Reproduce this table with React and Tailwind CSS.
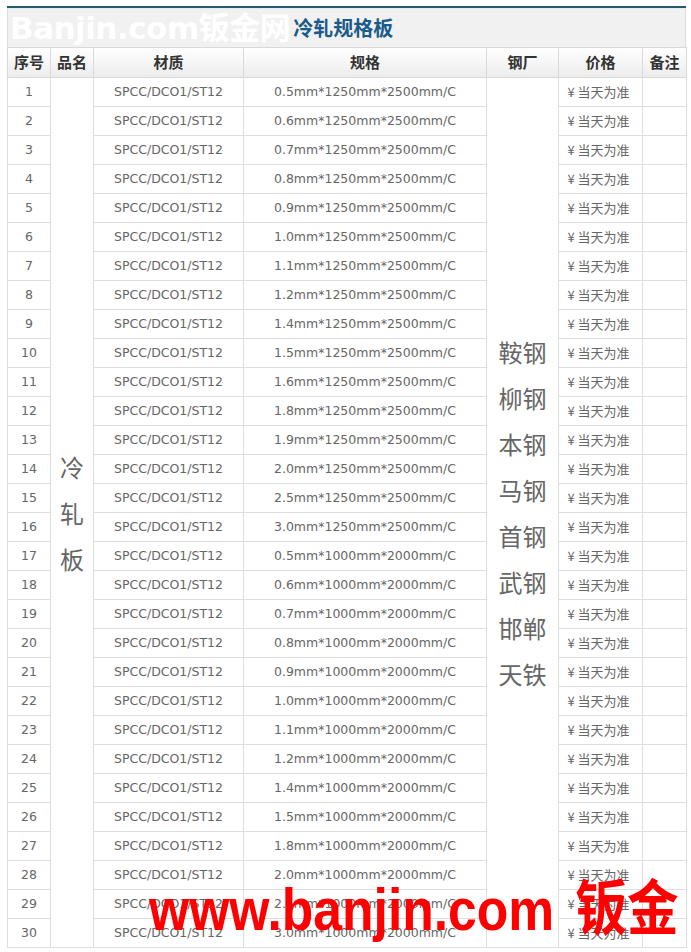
const specs = [
  "0.5mm*1250mm*2500mm/C",
  "0.6mm*1250mm*2500mm/C",
  "0.7mm*1250mm*2500mm/C",
  "0.8mm*1250mm*2500mm/C",
  "0.9mm*1250mm*2500mm/C",
  "1.0mm*1250mm*2500mm/C",
  "1.1mm*1250mm*2500mm/C",
  "1.2mm*1250mm*2500mm/C",
  "1.4mm*1250mm*2500mm/C",
  "1.5mm*1250mm*2500mm/C",
  "1.6mm*1250mm*2500mm/C",
  "1.8mm*1250mm*2500mm/C",
  "1.9mm*1250mm*2500mm/C",
  "2.0mm*1250mm*2500mm/C",
  "2.5mm*1250mm*2500mm/C",
  "3.0mm*1250mm*2500mm/C",
  "0.5mm*1000mm*2000mm/C",
  "0.6mm*1000mm*2000mm/C",
  "0.7mm*1000mm*2000mm/C",
  "0.8mm*1000mm*2000mm/C",
  "0.9mm*1000mm*2000mm/C",
  "1.0mm*1000mm*2000mm/C",
  "1.1mm*1000mm*2000mm/C",
  "1.2mm*1000mm*2000mm/C",
  "1.4mm*1000mm*2000mm/C",
  "1.5mm*1000mm*2000mm/C",
  "1.8mm*1000mm*2000mm/C",
  "2.0mm*1000mm*2000mm/C",
  "2.5mm*1000mm*2000mm/C",
  "3.0mm*1000mm*2000mm/C",
];

const mills = ["鞍钢", "柳钢", "本钢", "马钢", "首钢", "武钢", "邯郸", "天铁"];

const cjk = { fontFamily: '"Noto Sans CJK SC", sans-serif' };
const latin = { fontFamily: '"DejaVu Sans", "Noto Sans CJK SC", sans-serif' };

const App = () => {
  return (
    <main className="bg-white min-h-[952px] pt-[6px] pl-[7px]">
      <div className="relative w-[679px]">
        {/* title bar */}
        <div className="border-t-[2px] border-[#245a6c]">
          <div className="h-[1px] bg-[#dcefF2]" />
          <div className="h-[38px] bg-[#f1f1f1] border-x border-[#dcdcdc] flex items-center overflow-hidden">
            <span
              className="text-white font-bold text-[31px] leading-none pl-[2px] tracking-[-0.5px]"
              style={latin}
            >
              Banjin.com钣金网
            </span>
            <span className="text-[#1b5b8b] font-bold text-[20px] leading-none ml-[3px]" style={cjk}>
              冷轧规格板
            </span>
          </div>
        </div>

        <table className="table-fixed border-collapse w-[679px]">
          <colgroup>
            <col className="w-[43px]" />
            <col className="w-[43px]" />
            <col className="w-[150px]" />
            <col className="w-[243px]" />
            <col className="w-[72px]" />
            <col className="w-[84px]" />
            <col className="w-[44px]" />
          </colgroup>
          <thead>
            <tr className="h-[30px] bg-gradient-to-b from-white to-[#ececec]">
              {["序号", "品名", "材质", "规格", "钢厂", "价格", "备注"].map((h) => (
                <th
                  key={h}
                  className="border border-[#d9d9d9] text-[15px] font-bold text-[#333] p-0"
                  style={cjk}
                >
                  {h}
                </th>
              ))}
            </tr>
          </thead>
          <tbody>
            {specs.map((s, i) => (
              <tr key={i} className="h-[29px]">
                <td className="border border-[#dedede] text-center text-[12.5px] text-[#666] p-0" style={latin}>
                  {i + 1}
                </td>
                {i === 0 && (
                  <td rowSpan={30} className="border border-[#dedede] p-0 align-middle">
                    <div className="flex flex-col items-center text-[24px] leading-[46px] text-[#666]" style={cjk}>
                      <span>冷</span>
                      <span>轧</span>
                      <span>板</span>
                    </div>
                  </td>
                )}
                <td className="border border-[#dedede] text-center text-[12.5px] text-[#666] p-0" style={latin}>
                  SPCC/DCO1/ST12
                </td>
                <td className="border border-[#dedede] text-center text-[12.5px] text-[#666] p-0" style={latin}>
                  {s}
                </td>
                {i === 0 && (
                  <td rowSpan={30} className="border border-[#dedede] p-0 align-middle">
                    <div className="flex flex-col items-center text-[24px] leading-[46px] text-[#666]" style={cjk}>
                      {mills.map((m) => (
                        <span key={m}>{m}</span>
                      ))}
                    </div>
                  </td>
                )}
                <td className="border border-[#dedede] text-center text-[13px] text-[#666] p-0 pr-[4px]" style={cjk}>
                  ¥ 当天为准
                </td>
                <td className="border border-[#dedede] p-0" />
              </tr>
            ))}
          </tbody>
        </table>

        {/* watermark */}
        <div
          className="absolute left-[142px] top-[874px] text-[#ff0000] font-bold text-[60px] leading-none whitespace-nowrap origin-left scale-x-[0.86] pointer-events-none"
          style={{ fontFamily: '"Liberation Sans", "Noto Sans CJK SC", sans-serif' }}
        >
          www.banjin.com <span className="ml-[8px]">钣金</span>
        </div>
      </div>
    </main>
  );
};

export default App;
